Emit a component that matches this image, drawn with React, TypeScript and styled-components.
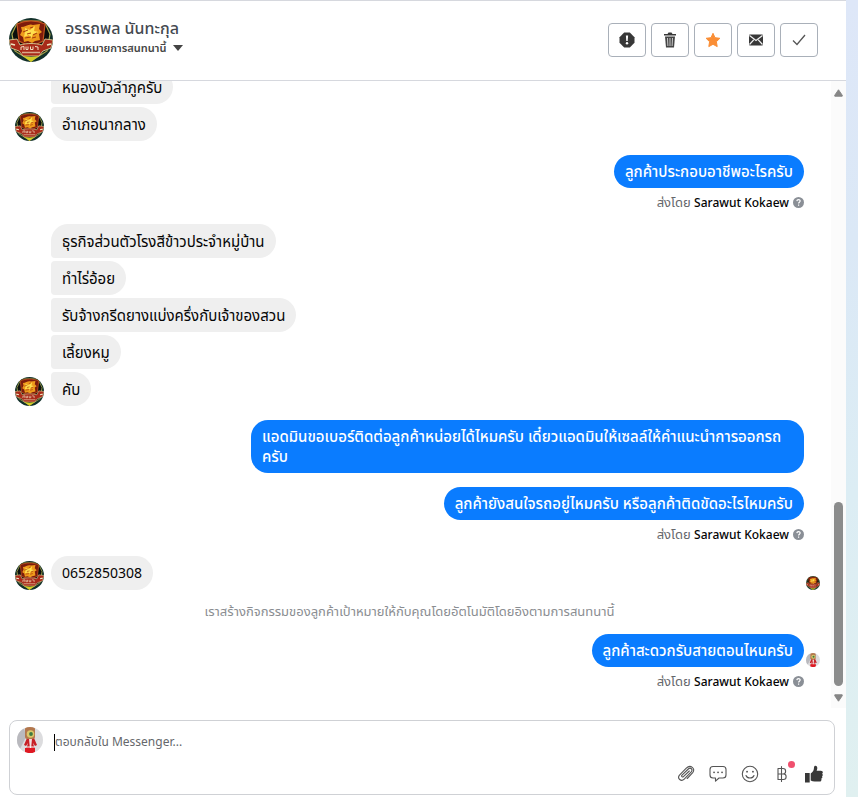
import React from "react";
import styled, { createGlobalStyle } from "styled-components";

const GlobalStyle = createGlobalStyle`
  *, *::before, *::after { box-sizing: border-box; }
  body {
    margin: 0;
    background: #fff;
    color: #050505;
    font-family: "Noto Sans", "Noto Sans Thai", "Leelawadee UI", "Tahoma", sans-serif;
    font-size: 15px;
    line-height: 20px;
  }
  button, input { font: inherit; color: inherit; }
`;

const Page = styled.div`
  display: flex;
  height: 100vh;
  min-height: 480px;
`;

const Panel = styled.main`
  flex: 1;
  min-width: 0;
  display: flex;
  flex-direction: column;
  border-top: 1px solid #d6d8de;
`;

const Backdrop = styled.div`
  flex: none;
  width: 12px;
  background: linear-gradient(#dee7f8, #dbe8f6 30%, #dcedf4 62%, #e0f0f0);
`;

const Header = styled.header`
  flex: none;
  display: flex;
  align-items: center;
  gap: 12px;
  height: 80px;
  padding: 0 28px 2px 9px;
  border-bottom: 1px solid #d6d8de;
`;

const Contact = styled.div`
  flex: 1;
  min-width: 0;
  padding-bottom: 5px;
`;

const ContactName = styled.h1`
  margin: 0;
  color: #444950;
  font-size: 16px;
  font-weight: 500;
  line-height: 22px;
`;

const AssignButton = styled.button`
  display: flex;
  align-items: center;
  gap: 7px;
  padding: 0;
  border: 0;
  background: none;
  color: #444;
  font-size: 11px;
  font-weight: 600;
  line-height: 18px;
`;

const Actions = styled.div`
  display: flex;
  gap: 5px;
`;

const ActionButton = styled.button`
  display: grid;
  place-items: center;
  width: 38px;
  height: 34px;
  padding: 0;
  border: 1px solid #a9b0b9;
  border-radius: 4px;
  background: #fff;
`;

const Conversation = styled.div`
  flex: 1;
  min-height: 0;
  display: flex;
`;

const Messages = styled.section`
  flex: 1;
  min-width: 0;
  display: flex;
  flex-direction: column;
  justify-content: flex-end;
  overflow: hidden;
  padding: 0 11px 5px 15px;
`;

const Incoming = styled.div`
  flex: none;
  display: flex;
  align-items: flex-end;
  gap: 7px;
`;

const Stack = styled.div`
  flex: 1;
  display: flex;
  flex-direction: column;
  align-items: flex-start;
  gap: 3px;
`;

type Position = "only" | "first" | "middle" | "last";

const corners: Record<Position, string> = {
  only: "17px",
  first: "17px 17px 17px 4px",
  middle: "4px 17px 17px 4px",
  last: "4px 17px 17px 17px",
};

const Bubble = styled.p<{ $position: Position; $numeric: boolean }>`
  margin: 0;
  padding: 7px 11px;
  border-radius: ${(p) => corners[p.$position]};
  background: #efefef;
  color: #050505;
  font-size: ${(p) => (p.$numeric ? 14 : 15)}px;
`;

const Outgoing = styled.div`
  flex: none;
  display: flex;
  justify-content: flex-end;
  align-items: flex-end;
  gap: 2px;
`;

const SpacedOutgoing = styled(Outgoing)`
  margin-top: 14px;
`;

const SentBubble = styled.p`
  margin: 0;
  max-width: 553px;
  padding: 6px 11px 7px;
  border-radius: 17px;
  background: #0a7cff;
  color: #fff;
  font-weight: 500;
`;

const ReceiptSlot = styled.span`
  flex: none;
  display: block;
  width: 14px;
`;

const Caption = styled.p`
  flex: none;
  display: flex;
  justify-content: flex-end;
  align-items: center;
  gap: 4px;
  margin: 5px 16px 12px;
  color: #65676b;
  font-size: 13px;
  line-height: 18px;

  strong {
    color: #050505;
    font-size: 12px;
    font-weight: 500;
  }
`;

const Notice = styled.p`
  flex: none;
  margin: 12px 16px 14px 0;
  color: #8a8d91;
  font-size: 13px;
  line-height: 18px;
  text-align: center;
`;

const Scrollbar = styled.div`
  flex: none;
  display: flex;
  flex-direction: column;
  align-items: center;
  width: 15px;
  padding: 8px 0 6px;
  background: #fbfbfb;
`;

const Thumb = styled.div`
  width: 9px;
  height: 30%;
  margin: auto 0 8px;
  border-radius: 5px;
  background: #8b8c8c;
`;

const Composer = styled.form`
  flex: none;
  display: flex;
  flex-direction: column;
  height: 75px;
  margin: 12px 11px 2px 9px;
  padding: 6px 10px 10px 7px;
  border: 1px solid #cfd1d5;
  border-radius: 8px;
`;

const ReplyRow = styled.div`
  display: flex;
  align-items: center;
  gap: 11px;
`;

const Field = styled.label`
  flex: 1;
  min-width: 0;
  display: flex;
  align-items: center;
  padding-top: 4px;
`;

const Caret = styled.span`
  flex: none;
  width: 1px;
  height: 17px;
  background: #000;
`;

const ReplyInput = styled.input`
  flex: 1;
  min-width: 0;
  padding: 0;
  border: 0;
  outline: 0;
  background: none;
  font-size: 12px;

  &::placeholder { color: #65676b; opacity: 1; }
`;

const Tools = styled.div`
  display: flex;
  justify-content: flex-end;
  align-items: center;
  gap: 12px;
  margin-top: auto;
`;

const ToolButton = styled.button`
  position: relative;
  display: grid;
  place-items: center;
  width: 20px;
  height: 20px;
  padding: 0;
  border: 0;
  background: none;
`;

const Alert = styled.span`
  position: absolute;
  top: -3px;
  right: -3px;
  width: 7px;
  height: 7px;
  border-radius: 50%;
  background: #f0506e;
`;

const Picture = styled.svg<{ $size: number }>`
  flex: none;
  display: block;
  width: ${(p) => p.$size}px;
  height: ${(p) => p.$size}px;
  border-radius: 50%;
`;

function CrestAvatar({ size }: { size: number }) {
  return (
    <Picture $size={size} viewBox="0 0 44 44" role="img" aria-label="อรรถพล นันทะกุล">
      <rect width="44" height="44" fill="#12302a" />
      <path d="M3 16 9 3h26l6 13-3 17-16 10L6 33z" fill="#0b0f0c" stroke="#a8a64a" strokeWidth="1.2" />
      <path d="M8 6c9-4 19-4 28 0l-2 17-12 6-12-6z" fill="#7d1c0c" stroke="#c2521e" strokeWidth="1.2" />
      <path d="M12 9c5 0 8-4 12-2l7-1-1 5 3 3-3 2 1 6-5 1-3 2-4-2-4 1-1-5-3-2 2-4z" fill="#ee9a1c" />
      <path d="m16 10 5 2 5-4-1 5 5 1-6 2-2 5-2-4-5 2 1-5z" fill="#ffdf4d" />
      <path d="m14 14 5-2m-1 4 4-1m-6 5 6-1m2-2 4-2m-5 5 4-1m-6-9 3-1" stroke="#a53a0c" fill="none" />
      <path d="m0 22 8-1 3 6c7-2 15-2 22 0l3-6 8 1-2 8-8 3-4 5H14l-4-5-8-3z" fill="#a82a19" stroke="#d9cf9a" strokeWidth=".9" />
      <path d="m2 26 4 1m32 0 4-1" stroke="#eee3c0" strokeWidth="1.6" />
      <path d="M12 32v-3l3-.5V32m2-3.500v3h2v-3m2.500 0v3h2.500v-3m2 0 3 .5v3" stroke="#f3dfc2" fill="none" />
      <path d="M13 34.500h18" stroke="#d9a98c" strokeWidth="1.300" />
      <path d="m14 38 8 1 8-1-8 6z" fill="#d2cc25" />
    </Picture>
  );
}

function AdminAvatar({ size }: { size: number }) {
  return (
    <Picture $size={size} viewBox="0 0 26 26" role="img" aria-label="Sarawut Kokaew">
      <rect width="26" height="26" fill="#dcdcde" />
      <path d="M0 0h7l2 10-6 12H0z" fill="#b9b9be" />
      <path d="m10 11-3 7 2 1 2-3-2 7 2 3h5l2-3-2-7 2 3 2-1-3-7z" fill="#c81f25" />
      <path d="m12 12 1 10h1l1-10z" fill="#f2dede" />
      <rect x="8" y="0" width="10" height="12" rx="2" fill="#b3774c" />
      <circle cx="13.500" cy="7" r="3.800" fill="#d9c76a" />
      <circle cx="14" cy="7" r="1.900" fill="#3c7a42" />
      <path d="M8 21h10v5H8z" fill="#e01822" />
      <path d="M10 20h7" stroke="#fff" />
    </Picture>
  );
}

const HelpIcon = () => (
  <svg width="11" height="11" viewBox="0 0 12 12" aria-hidden="true">
    <circle cx="6" cy="6" r="6" fill="#8a8f96" />
    <path d="M4.200 4.500C4.300 2.200 7.900 2.300 7.800 4.400 7.800 5.700 6.100 5.700 6.100 7.100M6.100 8.300v1.300" stroke="#fff" strokeWidth="1.300" fill="none" />
  </svg>
);

const Triangle = ({ up }: { up?: boolean }) => (
  <svg width="9" height="8" viewBox="0 0 9 8" aria-hidden="true">
    <path
      d={up ? "M4.500.8 8.200 6.200v1H.8v-1z" : "M4.500 7.200.8 1.800v-1h7.400v1z"}
      fill="#868686"
      stroke="#868686"
      strokeLinejoin="round"
    />
  </svg>
);

const actions = [
  {
    label: "สแปม",
    icon: (
      <svg width="16" height="16" viewBox="0 0 16 16">
        <path d="M5.200.5h5.600L15.500 5.200v5.600l-4.700 4.700H5.200L.5 10.800V5.200z" fill="#383838" />
        <path d="M6.900 3.500h2.200l-.4 5.500H7.300z" fill="#fff" />
        <circle cx="8" cy="11.300" r="1.200" fill="#fff" />
      </svg>
    ),
  },
  {
    label: "ลบ",
    icon: (
      <svg width="14" height="16" viewBox="0 0 14 16">
        <path d="M1 3.500V2h3.500L5.500.5h3l1 1.500H13v1.500z" fill="#383838" />
        <path d="M2 4.500h10l-1 11H3z" fill="#444" />
        <path d="m4.500 6 .4 8M7 6v8m2.500-8-.4 8" stroke="#ccc" />
      </svg>
    ),
  },
  {
    label: "ติดตาม",
    icon: (
      <svg width="16" height="16" viewBox="0 0 16 16">
        <path d="m8 1.300 2 4.400 4.900.6-3.500 3.400.8 4.900L8 12.300l-4.200 2.300.8-4.900L1.100 6.300 6 5.700z" fill="#fa8e35" stroke="#fa8e35" strokeLinejoin="round" />
      </svg>
    ),
  },
  {
    label: "ยังไม่ได้อ่าน",
    icon: (
      <svg width="14" height="12" viewBox="0 0 14 12">
        <rect y=".5" width="14" height="11" rx="1" fill="#383838" />
        <path d="m.5 1.500 6.500 5 6.500-5M.5 10.500l4.200-4.700m4.600 0 4.200 4.700" stroke="#f3f3f3" strokeWidth="1.200" fill="none" />
      </svg>
    ),
  },
  {
    label: "เสร็จสิ้น",
    icon: (
      <svg width="14" height="12" viewBox="0 0 14 12">
        <path d="m1 6.500 4 4L13 1" stroke="#555" strokeWidth="1.300" fill="none" />
      </svg>
    ),
  },
];

const line = { fill: "none", stroke: "#555", strokeWidth: 1.1, strokeLinecap: "round", strokeLinejoin: "round" } as const;

const tools = [
  {
    label: "แนบไฟล์",
    icon: (
      <svg width="18" height="18" viewBox="0 0 18 18" {...line}>
        <path d="M12.300 6 6.400 11.600c-1 1-2.400-.3-1.400-1.400L11.300 4c2.200-2.100 5 .5 2.900 2.800l-7 7.300c-3 3-7.400-.6-4.700-4l6.800-7C13.500-.9 19 3.500 15.700 7.700l-5.500 5.800" />
      </svg>
    ),
  },
  {
    label: "คำตอบที่บันทึกไว้",
    icon: (
      <svg width="18" height="18" viewBox="0 0 18 18" {...line}>
        <path d="M4 1.500h10c1.700 0 3 1.300 3 3V10c0 1.700-1.300 3-3 3h-4l-3.500 3.200V13H4c-1.700 0-3-1.300-3-3V4.500c0-1.700 1.300-3 3-3z" />
        <path d="M5 7.300h.1M9 7.300h.1m3.900 0h.1" strokeWidth="1.700" />
      </svg>
    ),
  },
  {
    label: "อิโมจิ",
    icon: (
      <svg width="18" height="18" viewBox="0 0 18 18" {...line}>
        <circle cx="9" cy="9" r="7.700" />
        <path d="M5 10.500c1.200 3.300 6.800 3.300 8 0" />
        <path d="M6 6.700h.1m5.800 0h.1" strokeWidth="1.800" />
      </svg>
    ),
  },
  {
    label: "การชำระเงิน",
    alert: true,
    icon: (
      <svg width="12" height="18" viewBox="0 0 12 18" {...line}>
        <path d="M2 3.500h5c3.500 0 3.500 5.500 0 5.500H2zM2 9h5.500c3.500 0 3.500 5.500 0 5.500H2zM5.500 1.500v15" />
      </svg>
    ),
  },
  {
    label: "ถูกใจ",
    icon: (
      <svg width="18" height="18" viewBox="0 0 18 18" fill="#383838">
        <path d="M0 8h4.700v9.500H0zM5.700 8.500C8 7 9 5 9 2.500 9-.2 12.300.2 12.300 3c0 1.300-.4 2-.7 2.800h4.200c2.400 0 2.500 2.500 1.200 2.900 1.200.7.900 2.200 0 2.600.7.800.4 2-.7 2.300.5 1-.1 2.900-1.600 2.900H9.700c-1.500 0-2.700-.3-4-.9z" />
      </svg>
    ),
  },
];

const SentBy = () => (
  <Caption>
    <span>ส่งโดย <strong>Sarawut Kokaew</strong></span>
    <HelpIcon />
  </Caption>
);

function Received({ texts, continued, seen }: { texts: string[]; continued?: boolean; seen?: boolean }) {
  const place = (i: number): Position => {
    const first = i === 0 && !continued;
    const last = i === texts.length - 1;
    return first && last ? "only" : first ? "first" : last ? "last" : "middle";
  };
  return (
    <Incoming>
      <CrestAvatar size={29} />
      <Stack>
        {texts.map((text, i) => (
          <Bubble key={text} $position={place(i)} $numeric={/^\d+$/.test(text)}>{text}</Bubble>
        ))}
      </Stack>
      {seen && <CrestAvatar size={14} />}
    </Incoming>
  );
}

function Sent({ text, spaced, seen }: { text: string; spaced?: boolean; seen?: boolean }) {
  const Row = spaced ? SpacedOutgoing : Outgoing;
  return (
    <Row>
      <SentBubble>{text}</SentBubble>
      <ReceiptSlot>{seen && <AdminAvatar size={14} />}</ReceiptSlot>
    </Row>
  );
}

export default function App() {
  return (
    <>
      <GlobalStyle />
      <Page>
        <Panel>
          <Header>
            <CrestAvatar size={44} />
            <Contact>
              <ContactName>อรรถพล นันทะกุล</ContactName>
              <AssignButton type="button">
                มอบหมายการสนทนานี้
                <svg width="10" height="6" viewBox="0 0 10 6" aria-hidden="true">
                  <path d="M0 0h10L5 6z" fill="#444" />
                </svg>
              </AssignButton>
            </Contact>
            <Actions>
              {actions.map((a) => (
                <ActionButton key={a.label} type="button" aria-label={a.label}>{a.icon}</ActionButton>
              ))}
            </Actions>
          </Header>

          <Conversation>
            <Messages>
              <Received continued texts={["หนองบัวลำภูครับ", "อำเภอนากลาง"]} />
              <Sent spaced text="ลูกค้าประกอบอาชีพอะไรครับ" />
              <SentBy />
              <Received
                texts={[
                  "ธุรกิจส่วนตัวโรงสีข้าวประจำหมู่บ้าน",
                  "ทำไร่อ้อย",
                  "รับจ้างกรีดยางแบ่งครึ่งกับเจ้าของสวน",
                  "เลี้ยงหมู",
                  "คับ",
                ]}
              />
              <Sent spaced text="แอดมินขอเบอร์ติดต่อลูกค้าหน่อยได้ไหมครับ เดี๋ยวแอดมินให้เซลล์ให้คำแนะนำการออกรถครับ" />
              <Sent spaced text="ลูกค้ายังสนใจรถอยู่ไหมครับ หรือลูกค้าติดขัดอะไรไหมครับ" />
              <SentBy />
              <Received seen texts={["0652850308"]} />
              <Notice>เราสร้างกิจกรรมของลูกค้าเป้าหมายให้กับคุณโดยอัตโนมัติโดยอิงตามการสนทนานี้</Notice>
              <Sent seen text="ลูกค้าสะดวกรับสายตอนไหนครับ" />
              <SentBy />
            </Messages>
            <Scrollbar aria-hidden="true">
              <Triangle up />
              <Thumb />
              <Triangle />
            </Scrollbar>
          </Conversation>

          <Composer>
            <ReplyRow>
              <AdminAvatar size={26} />
              <Field>
                <Caret />
                <ReplyInput aria-label="ตอบกลับ" placeholder="ตอบกลับใน Messenger..." />
              </Field>
            </ReplyRow>
            <Tools>
              {tools.map((t) => (
                <ToolButton key={t.label} type="button" aria-label={t.label}>
                  {t.icon}
                  {t.alert && <Alert />}
                </ToolButton>
              ))}
            </Tools>
          </Composer>
        </Panel>
        <Backdrop />
      </Page>
    </>
  );
}
